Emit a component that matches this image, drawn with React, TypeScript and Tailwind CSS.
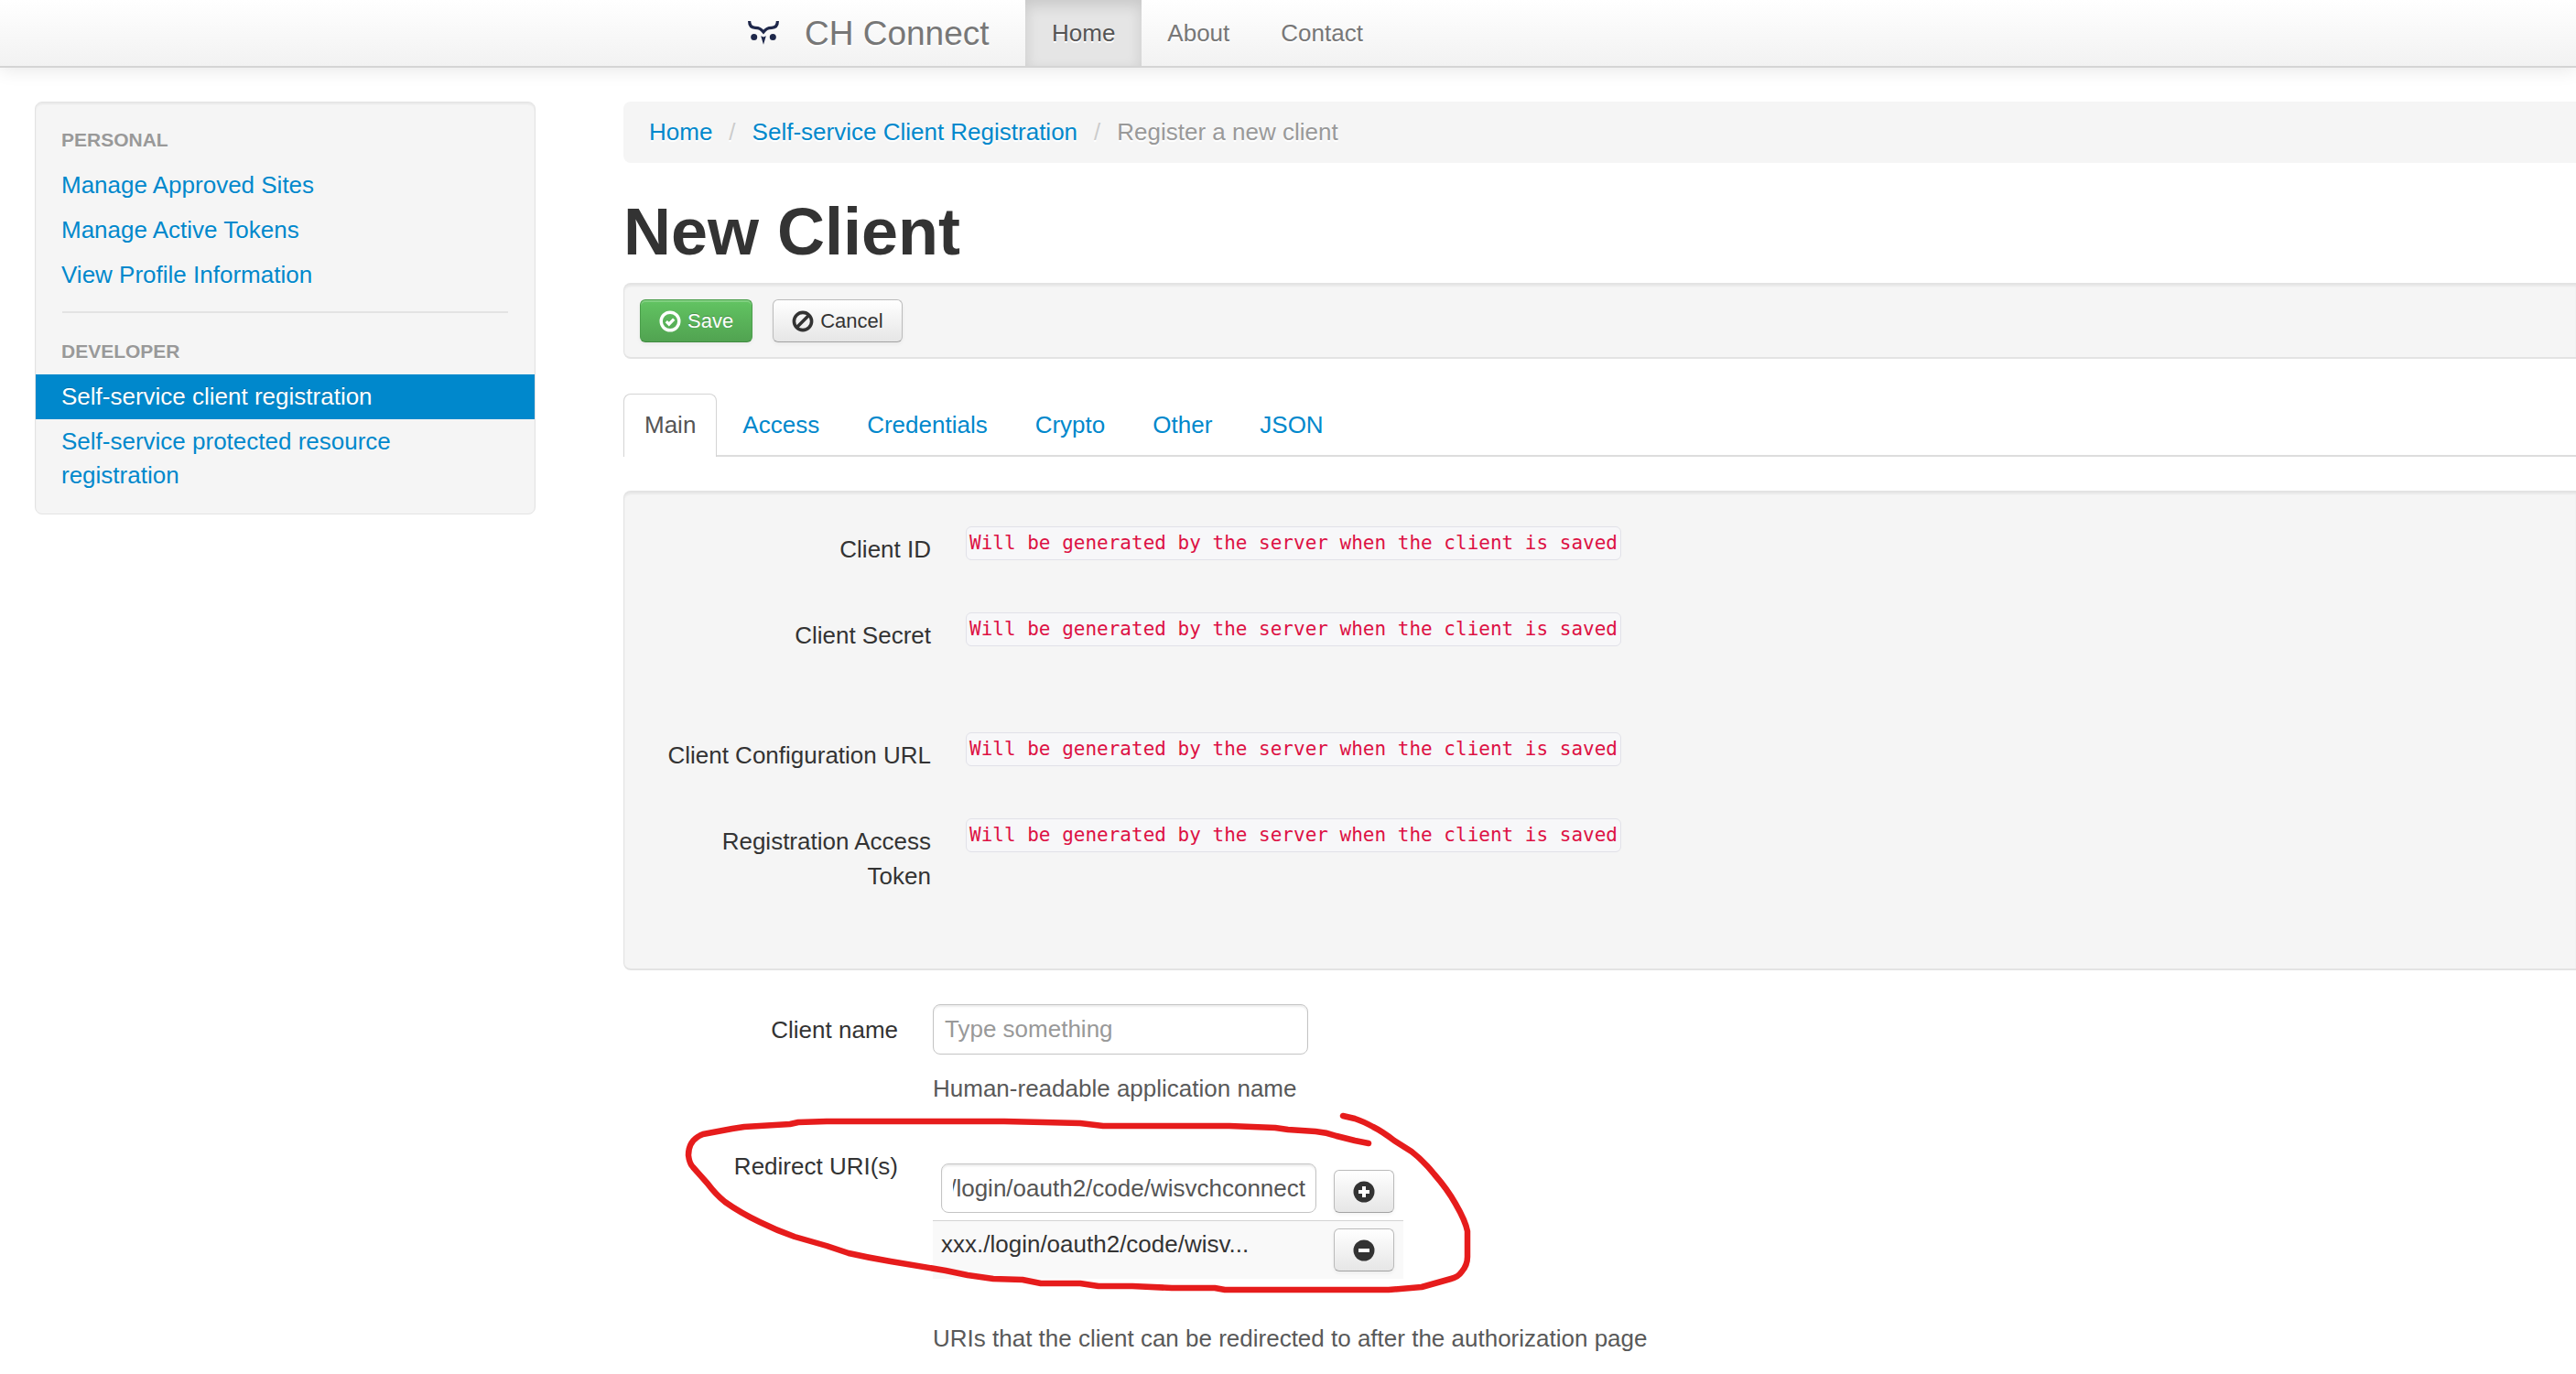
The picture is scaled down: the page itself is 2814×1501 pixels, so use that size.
import type { ReactNode } from "react";

const PENDING = "Will be generated by the server when the client is saved";

const linkCls = "text-[#0088cc] hover:underline";
const wellCls =
  "rounded-l-lg border-y-2 border-l border-[#e3e3e3] bg-[#f5f5f5] shadow-[inset_0_2px_2px_rgba(0,0,0,0.05)]";
const btnCls =
  "flex h-[47px] items-center rounded-md border border-[#bbbbbb] border-b-[#a2a2a2] bg-gradient-to-b from-white to-[#e6e6e6] text-[22px] text-[#333333] shadow-[inset_0_2px_0_rgba(255,255,255,0.2),0_2px_4px_rgba(0,0,0,0.05)]";
const inputCls =
  "rounded-lg border border-[#c4c4c4] bg-white text-[26px] leading-[37px] text-[#555555] shadow-[inset_0_2px_2px_rgba(0,0,0,0.075)] outline-none placeholder:text-[#999999]";

function Logo() {
  return (
    <svg viewBox="0 0 34 26" className="h-[26px] w-[34px]" aria-hidden="true">
      <path
        d="M1.600 0c0 4.500 2.400 7.200 6.400 7.400 4.200.200 6 .800 9 4.600 3-3.800 4.800-4.400 9-4.600 4-.200 6.400-2.900 6.400-7.400"
        fill="none"
        stroke="#1e274a"
        strokeWidth="3.200"
      />
      <circle cx="6.700" cy="17.400" r="3.500" fill="#1e274a" />
      <circle cx="27.300" cy="17.400" r="3.500" fill="#1e274a" />
      <path d="M14.200 16.200l2.800 1.200 2.800-1.200-2.800 9.600z" fill="#1e274a" />
    </svg>
  );
}

function OkCircle() {
  return (
    <svg viewBox="0 0 24 24" className="size-6" aria-hidden="true">
      <circle cx="12" cy="12" r="9.800" fill="none" stroke="#fff" strokeWidth="3.400" />
      <path d="M7.800 12.200l3 3 5.400-5.600" fill="none" stroke="#fff" strokeWidth="3.200" />
    </svg>
  );
}

function BanCircle() {
  return (
    <svg viewBox="0 0 24 24" className="size-6" aria-hidden="true">
      <circle cx="12" cy="12" r="9.600" fill="none" stroke="#333" strokeWidth="3.600" />
      <path d="M5.500 18.500l13-13" stroke="#333" strokeWidth="3.600" />
    </svg>
  );
}

function SignCircle({ plus }: { plus?: boolean }) {
  return (
    <svg viewBox="0 0 24 24" className="size-6" aria-hidden="true">
      <circle cx="12" cy="12" r="11.500" fill="#333" />
      <path d={plus ? "M6 12h12M12 6v12" : "M6 12h12"} stroke="#fff" strokeWidth="4" />
    </svg>
  );
}

function RedLoop() {
  return (
    <svg
      viewBox="0 0 960 220"
      className="pointer-events-none absolute -top-10 left-0 h-[220px] w-[960px]"
      aria-hidden="true"
    >
      <path
        d="M814 43L799 40L779 35Q768 31 756 30L726 28L712 26L662 24H524L499 21L459 20L416 19H222L191 20L182 22L132 25L119 27L87 33Q71 39 71 56Q72 65 76 69L92 87Q101 99 111 107Q128 119 149 129Q167 138 187 145L222 155L246 163Q268 168 292 172L352 182L376 187L404 191L436 192L456 196L499 196L519 199L556 199L599 201L646 201L657 203H836L872 200L904 191Q912 189 916 183Q922 176 922 167V139Q920 128 909 109Q900 93 886 77Q874 62 861 52L842 40Q829 30 819 25Q808 19 799 16L786 13"
        fill="none"
        stroke="#e61c1c"
        strokeWidth="6.500"
        strokeLinecap="round"
        strokeLinejoin="round"
      />
    </svg>
  );
}

function NavHeader({ children }: { children: ReactNode }) {
  return (
    <h2 className="px-7 pt-[5px] pb-[7px] text-[21px] leading-[37px] font-bold text-[#999999] uppercase [text-shadow:0_1px_0_rgba(255,255,255,0.5)]">
      {children}
    </h2>
  );
}

function NavItem({ children, active }: { children: ReactNode; active?: boolean }) {
  return (
    <li>
      <a
        href="#"
        className={
          active
            ? "block bg-[#0088cc] px-7 py-[6px] text-white [text-shadow:0_-1px_0_rgba(0,0,0,0.2)]"
            : "block px-7 py-[6px] text-[#0088cc] [text-shadow:0_1px_0_rgba(255,255,255,0.5)]"
        }
      >
        {children}
      </a>
    </li>
  );
}

function ReadOnlyRow({ label, tall }: { label: string; tall?: boolean }) {
  return (
    <div className={tall ? "mb-[86px] flex items-start" : "mb-[49px] flex items-start"}>
      <dt className="w-[300px] pt-[7px] text-right leading-[38px]">{label}</dt>
      <dd className="mt-px ml-[38px]">
        <code className="block h-[37px] rounded-md border border-[#e1e1e8] bg-[#f7f7f9] px-[3px] font-['DejaVu_Sans_Mono',monospace] text-[21px] leading-[35px] whitespace-nowrap text-[#dd1144]">
          {PENDING}
        </code>
      </dd>
    </div>
  );
}

export default function App() {
  return (
    <div className="min-h-screen overflow-x-hidden bg-white font-['Liberation_Sans',Arial,sans-serif] text-[26px] leading-[37px] text-[#333333]">
      <header className="border-b-2 border-[#d4d4d4] bg-gradient-to-b from-white to-[#f2f2f2] shadow-[0_2px_19px_rgba(0,0,0,0.1)]">
        <nav className="flex h-[72px] items-stretch pl-[817px] text-[#777777] [text-shadow:0_2px_0_#ffffff]">
          <a href="#" className="flex w-[303px] items-center gap-7 text-[37px]">
            <Logo />
            CH Connect
          </a>
          <a
            href="#"
            className="flex items-center bg-[#e5e5e5] px-[29px] text-[#555555] shadow-[inset_0_6px_15px_rgba(0,0,0,0.125)]"
          >
            Home
          </a>
          <a href="#" className="flex items-center px-7">
            About
          </a>
          <a href="#" className="flex items-center px-7">
            Contact
          </a>
        </nav>
      </header>

      <div className="flex items-start gap-24 pt-[37px] pl-[38px]">
        <aside className="w-[547px] shrink-0 rounded-lg border border-[#e3e3e3] bg-[#f5f5f5] py-[17px] shadow-[inset_0_2px_2px_rgba(0,0,0,0.05)]">
          <NavHeader>Personal</NavHeader>
          <ul>
            <NavItem>Manage Approved Sites</NavItem>
            <NavItem>Manage Active Tokens</NavItem>
            <NavItem>View Profile Information</NavItem>
          </ul>
          <hr className="mx-[29px] mt-[15px] mb-[18px] border-t-2 border-[#e3e3e3]" />
          <NavHeader>Developer</NavHeader>
          <ul>
            <NavItem active>Self-service client registration</NavItem>
            <NavItem>Self-service protected resource registration</NavItem>
          </ul>
        </aside>

        <main className="min-w-0 flex-1">
          <nav
            aria-label="Breadcrumb"
            className="flex gap-[18px] rounded-l-lg bg-[#f5f5f5] px-7 py-[15px] [text-shadow:0_2px_0_#ffffff]"
          >
            <a href="#" className={linkCls}>
              Home
            </a>
            <span className="text-[#cccccc]">/</span>
            <a href="#" className={linkCls}>
              Self-service Client Registration
            </a>
            <span className="text-[#cccccc]">/</span>
            <span className="text-[#999999]">Register a new client</span>
          </nav>

          <h1 className="mt-[38px] text-[72px] leading-[75px] font-bold">New Client</h1>

          <div className={`${wellCls} mt-[18px] flex gap-[22px] py-4 pl-[17px]`}>
            <button
              type="button"
              className="flex h-[47px] items-center gap-[7px] rounded-md border border-[#4b9e4b] border-b-[#3f8a3f] bg-gradient-to-b from-[#62c462] to-[#51a351] px-5 text-[22px] text-white shadow-[inset_0_2px_0_rgba(255,255,255,0.2),0_2px_4px_rgba(0,0,0,0.05)] [text-shadow:0_-1px_0_rgba(0,0,0,0.25)]"
            >
              <OkCircle />
              Save
            </button>
            <button type="button" className={`${btnCls} gap-[7px] px-5`}>
              <BanCircle />
              Cancel
            </button>
          </div>

          <div role="tablist" className="mt-[38px] flex border-b-2 border-[#dddddd]">
            <button
              type="button"
              role="tab"
              aria-selected="true"
              className="-mb-[2px] rounded-t-lg border border-b-0 border-[#d4d4d4] bg-white px-[22px] pt-[14px] pb-4 text-[#555555]"
            >
              Main
            </button>
            {["Access", "Credentials", "Crypto", "Other", "JSON"].map((t) => (
              <button
                key={t}
                type="button"
                role="tab"
                aria-selected="false"
                className="ml-1 px-6 pt-4 pb-[14px] text-[#0088cc]"
              >
                {t}
              </button>
            ))}
          </div>

          <dl className={`${wellCls} mt-[37px] pt-9 pb-[33px] pl-[35px]`}>
            <ReadOnlyRow label="Client ID" />
            <ReadOnlyRow label="Client Secret" tall />
            <ReadOnlyRow label="Client Configuration URL" />
            <ReadOnlyRow label="Registration Access Token" />
          </dl>

          <form>
            <div className="mt-[37px] flex items-start">
              <label htmlFor="client-name" className="w-[300px] pt-[10px] text-right">
                Client name
              </label>
              <div className="ml-[38px]">
                <input
                  id="client-name"
                  placeholder="Type something"
                  className={`${inputCls} block h-[55px] w-[410px] px-3`}
                />
                <p className="mt-[19px] text-[#595959]">Human-readable application name</p>
              </div>
            </div>

            <div className="relative mt-[38px] flex items-start">
              <label htmlFor="redirect-uri" className="w-[300px] pt-[10px] text-right">
                Redirect URI(s)
              </label>
              <div className="ml-[38px]">
                <table className="mt-4 w-[514px] table-fixed">
                  <tbody>
                    <tr>
                      <td className="w-[438px] pt-[9px] pb-2 pl-[9px] align-top">
                        <div className={`${inputCls} flex h-[54px] w-[410px] items-center pr-[11px] pl-3`}>
                          <span className="flex w-full justify-end overflow-hidden">
                            <input
                              id="redirect-uri"
                              defaultValue="/login/oauth2/code/wisvchconnect"
                              className="w-[390px] shrink-0 text-right outline-none"
                            />
                          </span>
                        </div>
                      </td>
                      <td className="pt-4 align-top">
                        <button type="button" aria-label="Add" className={`${btnCls} px-5`}>
                          <SignCircle plus />
                        </button>
                      </td>
                    </tr>
                    <tr className="border-t border-[#d4d4d4] bg-[#f9f9f9]">
                      <td className="pt-[7px] pl-[9px] align-top">xxx./login/oauth2/code/wisv...</td>
                      <td className="pt-2 pb-2 align-top">
                        <button type="button" aria-label="Remove" className={`${btnCls} px-5`}>
                          <SignCircle />
                        </button>
                      </td>
                    </tr>
                  </tbody>
                </table>
                <p className="mt-[47px] text-[#595959]">
                  URIs that the client can be redirected to after the authorization page
                </p>
              </div>
              <RedLoop />
            </div>
          </form>
        </main>
      </div>
    </div>
  );
}
